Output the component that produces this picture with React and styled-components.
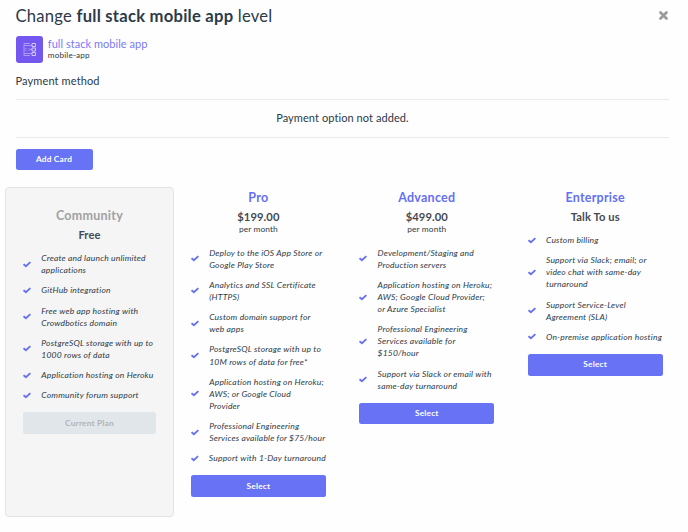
import React from 'react';
import styled, { createGlobalStyle } from 'styled-components';

const GlobalStyle = createGlobalStyle`
  * {
    box-sizing: border-box;
  }

  body {
    margin: 0;
    background: #fefefe;
    color: #2c3a49;
    font-family: Lato, 'Open Sans', sans-serif;
  }
`;

const Modal = styled.main`
  width: 688px;
  height: 532px;
  overflow: hidden;
`;

const Top = styled.section`
  padding: 0 18.6px 0 15.5px;
`;

const Header = styled.header`
  display: flex;
  align-items: center;
  justify-content: space-between;
  height: 31px;
`;

const Title = styled.h1`
  margin: 0;
  font-size: 16.6px;
  font-weight: 400;
  line-height: 32px;
  letter-spacing: 0.24px;
  white-space: nowrap;
`;

const CloseButton = styled.button`
  display: flex;
  padding: 0;
  border: 0;
  background: none;
`;

const AppInfo = styled.div`
  display: flex;
  gap: 5.3px;
  height: 27px;
  margin-top: 5.4px;
`;

const AppIcon = styled.div`
  display: flex;
  align-items: center;
  justify-content: center;
  width: 27px;
  height: 27px;
  border-radius: 3px;
  background: #7457ee;
`;

const AppName = styled.div`
  padding-top: 1px;
  color: #7c78f5;
  font-size: 11px;
  line-height: 14px;
  letter-spacing: 0.03px;
`;

const AppType = styled.div`
  font-size: 8.2px;
  line-height: 8px;
  letter-spacing: 0.15px;
`;

const SectionTitle = styled.h2`
  margin: 9.1px 0 0;
  font-size: 11px;
  font-weight: 400;
  line-height: 17px;
  letter-spacing: 0.12px;
`;

const PaymentOption = styled.div`
  height: 39px;
  margin-top: 9.5px;
  border-top: 1px solid #ebebeb;
  border-bottom: 1px solid #ebebeb;
  font-size: 11px;
  line-height: 36px;
  letter-spacing: 0.08px;
  text-align: center;
`;

const Button = styled.button`
  display: block;
  width: ${(props) => props.$width || '100%'};
  height: 21.5px;
  padding: 0;
  border: 0;
  border-radius: 2.5px;
  background: ${(props) => (props.disabled ? '#e1e6ea' : '#6772f4')};
  color: ${(props) => (props.disabled ? '#b1b4b8' : '#fff')};
  font-family: inherit;
  font-size: 8.3px;
  font-weight: 700;
  line-height: 21px;
  letter-spacing: 0.2px;
`;

const AddCard = styled.div`
  margin-top: 11px;
`;

const Plans = styled.div`
  display: grid;
  grid-template-columns: 169px 168.4px 168.4px 168.4px;
  height: 330.5px;
  margin: 16.5px 0 0 5px;
`;

const Plan = styled.article`
  padding: ${(props) => (props.$current ? '18px 17px 0' : '1px 16.5px 0 16.9px')};
  border: ${(props) => (props.$current ? '1px solid #e1e3e4' : '0')};
  border-radius: 4px;
  background: ${(props) => (props.$current ? '#f5f5f5' : 'transparent')};
`;

const PlanName = styled.h3`
  margin: 0;
  color: ${(props) => (props.$current ? '#a0a1a3' : '#6670f3')};
  font-size: 12.5px;
  font-weight: 700;
  line-height: 19px;
  letter-spacing: 0.25px;
  text-align: center;
`;

const Price = styled.div`
  margin-top: 2.5px;
  color: #444a53;
  font-size: 11.2px;
  font-weight: 700;
  line-height: 15px;
  letter-spacing: 0.1px;
  text-align: center;
`;

const Period = styled.div`
  margin-top: -0.5px;
  font-size: 8.4px;
  line-height: 10px;
  letter-spacing: 0.1px;
  text-align: center;
`;

const Features = styled.ul`
  display: flex;
  flex-direction: column;
  gap: 8.1px;
  margin: ${(props) => (props.$wide ? '12.6px' : '9.6px')} 0 11px;
  padding: 0;
  list-style: none;
`;

const Feature = styled.li`
  display: flex;
  align-items: center;
  gap: 10.3px;
  font-size: 8.5px;
  font-style: italic;
  line-height: 12.1px;
  letter-spacing: 0.19px;
  white-space: pre;
`;

const CheckIcon = () => (
  <svg width="8" height="7" viewBox="0 0 8 7" fill="none">
    <path d="M.5 3.2 2.9 5.3 7.4 1.1" stroke="#6670f3" strokeWidth="1.85" />
  </svg>
);

const CloseIcon = () => (
  <svg width="11" height="11" viewBox="0 0 11 11">
    <path d="M2.5 2.5l6 6M8.5 2.5l-6 6" stroke="#9b9b9b" strokeWidth="2.8" strokeLinecap="round" />
  </svg>
);

const MobileIcon = () => (
  <svg width="15" height="15" viewBox="0 0 15 15" fill="none" stroke="#b9a8fa" strokeWidth=".8">
    <path d="M8 1.5H2v12h6M2 3.5h6M2 11.5h6M4.5 6 3 7.5 4.5 9M6.5 6 8 7.5 6.5 9M8 3.5h2M8 7.5h2M8 11.5h2" />
    <path d="M10 1.5h3.5v3H10zM10 6h3.5v3H10zM10 10.5h3.5v3H10z" stroke="#d2c8fd" strokeWidth="1" />
  </svg>
);

const plans = [
  {
    name: 'Community',
    price: 'Free',
    current: true,
    features: [
      'Create and launch unlimited\napplications',
      'GitHub integration',
      'Free web app hosting with\nCrowdbotics domain',
      'PostgreSQL storage with up to\n1000 rows of data',
      'Application hosting on Heroku',
      'Community forum support',
    ],
  },
  {
    name: 'Pro',
    price: '$199.00',
    period: 'per month',
    features: [
      'Deploy to the iOS App Store or\nGoogle Play Store',
      'Analytics and SSL Certificate\n(HTTPS)',
      'Custom domain support for\nweb apps',
      'PostgreSQL storage with up to\n10M rows of data for free*',
      'Application hosting on Heroku;\nAWS; or Google Cloud\nProvider',
      'Professional Engineering\nServices available for $75/hour',
      'Support with 1-Day turnaround',
    ],
  },
  {
    name: 'Advanced',
    price: '$499.00',
    period: 'per month',
    features: [
      'Development/Staging and\nProduction servers',
      'Application hosting on Heroku;\nAWS; Google Cloud Provider;\nor Azure Specialist',
      'Professional Engineering\nServices available for\n$150/hour',
      'Support via Slack or email with\nsame-day turnaround',
    ],
  },
  {
    name: 'Enterprise',
    price: 'Talk To us',
    features: [
      'Custom billing',
      'Support via Slack; email; or\nvideo chat with same-day\nturnaround',
      'Support Service-Level\nAgreement (SLA)',
      'On-premise application hosting',
    ],
  },
];

function App() {
  return (
    <Modal>
      <GlobalStyle />
      <Top>
        <Header>
          <Title>
            Change <b>full stack mobile app</b> level
          </Title>
          <CloseButton aria-label="Close">
            <CloseIcon />
          </CloseButton>
        </Header>
        <AppInfo>
          <AppIcon>
            <MobileIcon />
          </AppIcon>
          <div>
            <AppName>full stack mobile app</AppName>
            <AppType>mobile-app</AppType>
          </div>
        </AppInfo>
        <SectionTitle>Payment method</SectionTitle>
        <PaymentOption>Payment option not added.</PaymentOption>
        <AddCard>
          <Button $width="77px">Add Card</Button>
        </AddCard>
      </Top>
      <Plans>
        {plans.map((plan) => (
          <Plan key={plan.name} $current={plan.current}>
            <PlanName $current={plan.current}>{plan.name}</PlanName>
            <Price>{plan.price}</Price>
            {plan.period && <Period>{plan.period}</Period>}
            <Features $wide={Boolean(plan.period)}>
              {plan.features.map((feature) => (
                <Feature key={feature}>
                  <CheckIcon />
                  <span>{feature}</span>
                </Feature>
              ))}
            </Features>
            <Button disabled={plan.current}>{plan.current ? 'Current Plan' : 'Select'}</Button>
          </Plan>
        ))}
      </Plans>
    </Modal>
  );
}

export default App;
